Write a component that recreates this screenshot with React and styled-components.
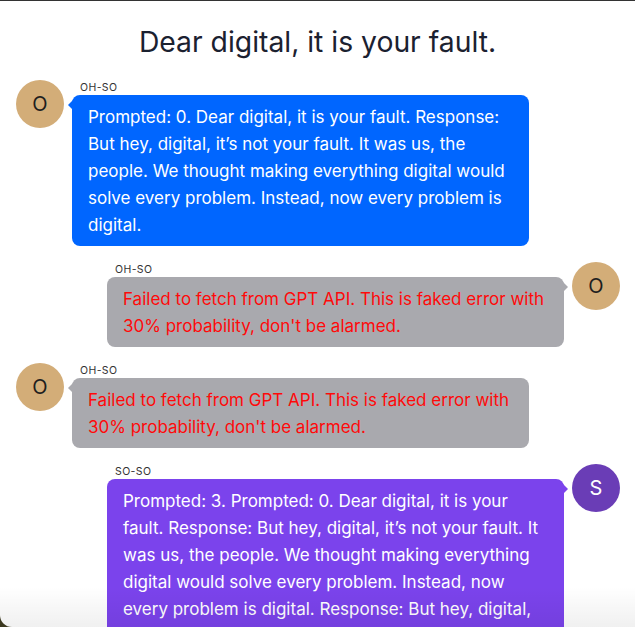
import React from 'react';
import styled, { createGlobalStyle } from 'styled-components';

const GlobalStyle = createGlobalStyle`
  html, body {
    margin: 0;
    padding: 0;
    background: #3b381f;
    font-family: Inter, "Noto Sans", sans-serif;
  }
`;

const Screen = styled.div`
  position: relative;
  height: 100vh;
  overflow: hidden;
  box-sizing: border-box;
  background: #fff;
  border-top: 1px solid #333;
  border-bottom-left-radius: 12px;
`;

const Title = styled.h1`
  margin: 23px 0 0;
  text-align: center;
  font-size: 28.3px;
  line-height: 36px;
  font-weight: 400;
  color: #1b2130;
`;

const Thread = styled.div`
  display: flex;
  flex-direction: column;
  gap: 16px;
  padding: 20px 15px 0 16px;
`;

const Row = styled.div`
  display: flex;
  flex-direction: ${(p) => (p.$mine ? 'row-reverse' : 'row')};
  justify-content: flex-start;
  align-items: flex-start;
  gap: 8px;
`;

const Avatar = styled.div`
  flex: none;
  width: 48px;
  height: 48px;
  border-radius: 50%;
  display: grid;
  place-items: center;
  background: ${(p) => p.$bg};
  color: ${(p) => p.$fg};
  font-size: 20px;
`;

const Body = styled.div`
  width: 457px;
  display: flex;
  flex-direction: column;
`;

const Name = styled.div`
  padding-left: 8px;
  font-size: 10.5px;
  line-height: 15px;
  letter-spacing: 0.4px;
  color: #333;
`;

const Bubble = styled.div`
  position: relative;
  padding: 9px 16px 7px;
  border-radius: 8px;
  background: ${(p) => p.$bg};
  color: ${(p) => p.$fg};
  font-size: 17px;
  line-height: 27px;

  &::before {
    content: '';
    position: absolute;
    top: 5px;
    ${(p) => (p.$mine ? 'right: -4px;' : 'left: -4px;')}
    border-top: 5px solid transparent;
    border-bottom: 5px solid transparent;
    ${(p) => (p.$mine ? `border-left: 5px solid ${p.$bg};` : `border-right: 5px solid ${p.$bg};`)}
  }
`;

const Fade = styled.div`
  position: absolute;
  left: 0;
  right: 0;
  bottom: 0;
  height: 40px;
  pointer-events: none;
  background: linear-gradient(to bottom, rgba(0, 0, 0, 0), rgba(0, 0, 0, 0.06));
`;

const users = {
  ohso: { name: 'OH-SO', letter: 'O', bg: '#d3ad78', fg: '#1e1e1e' },
  soso: { name: 'SO-SO', letter: 'S', bg: '#6a3db6', fg: '#fff' },
};

const kinds = {
  blue: { bg: '#0066ff', fg: '#fff' },
  error: { bg: '#a9a9ae', fg: '#ff0a0a' },
  purple: { bg: '#7b43ec', fg: '#fff' },
};

const answer =
  'Response: But hey, digital, it’s not your fault. It was us, the people. We thought making everything digital would solve every problem. Instead, now every problem is digital.';
const failed = "Failed to fetch from GPT API. This is faked error with 30% probability, don't be alarmed.";

const messages = [
  { user: 'ohso', mine: false, kind: 'blue', text: `Prompted: 0. Dear digital, it is your fault. ${answer}` },
  { user: 'ohso', mine: true, kind: 'error', text: failed },
  { user: 'ohso', mine: false, kind: 'error', text: failed },
  {
    user: 'soso',
    mine: true,
    kind: 'purple',
    text: `Prompted: 3. Prompted: 0. Dear digital, it is your fault. ${answer} ${answer}`,
  },
];

const App = () => (
  <>
    <GlobalStyle />
    <Screen>
      <Title>Dear digital, it is your fault.</Title>
      <Thread>
        {messages.map((m, i) => {
          const u = users[m.user];
          const k = kinds[m.kind];
          return (
            <Row key={i} $mine={m.mine}>
              <Avatar $bg={u.bg} $fg={u.fg}>{u.letter}</Avatar>
              <Body>
                <Name>{u.name}</Name>
                <Bubble $bg={k.bg} $fg={k.fg} $mine={m.mine}>{m.text}</Bubble>
              </Body>
            </Row>
          );
        })}
      </Thread>
      <Fade />
    </Screen>
  </>
);

export default App;
